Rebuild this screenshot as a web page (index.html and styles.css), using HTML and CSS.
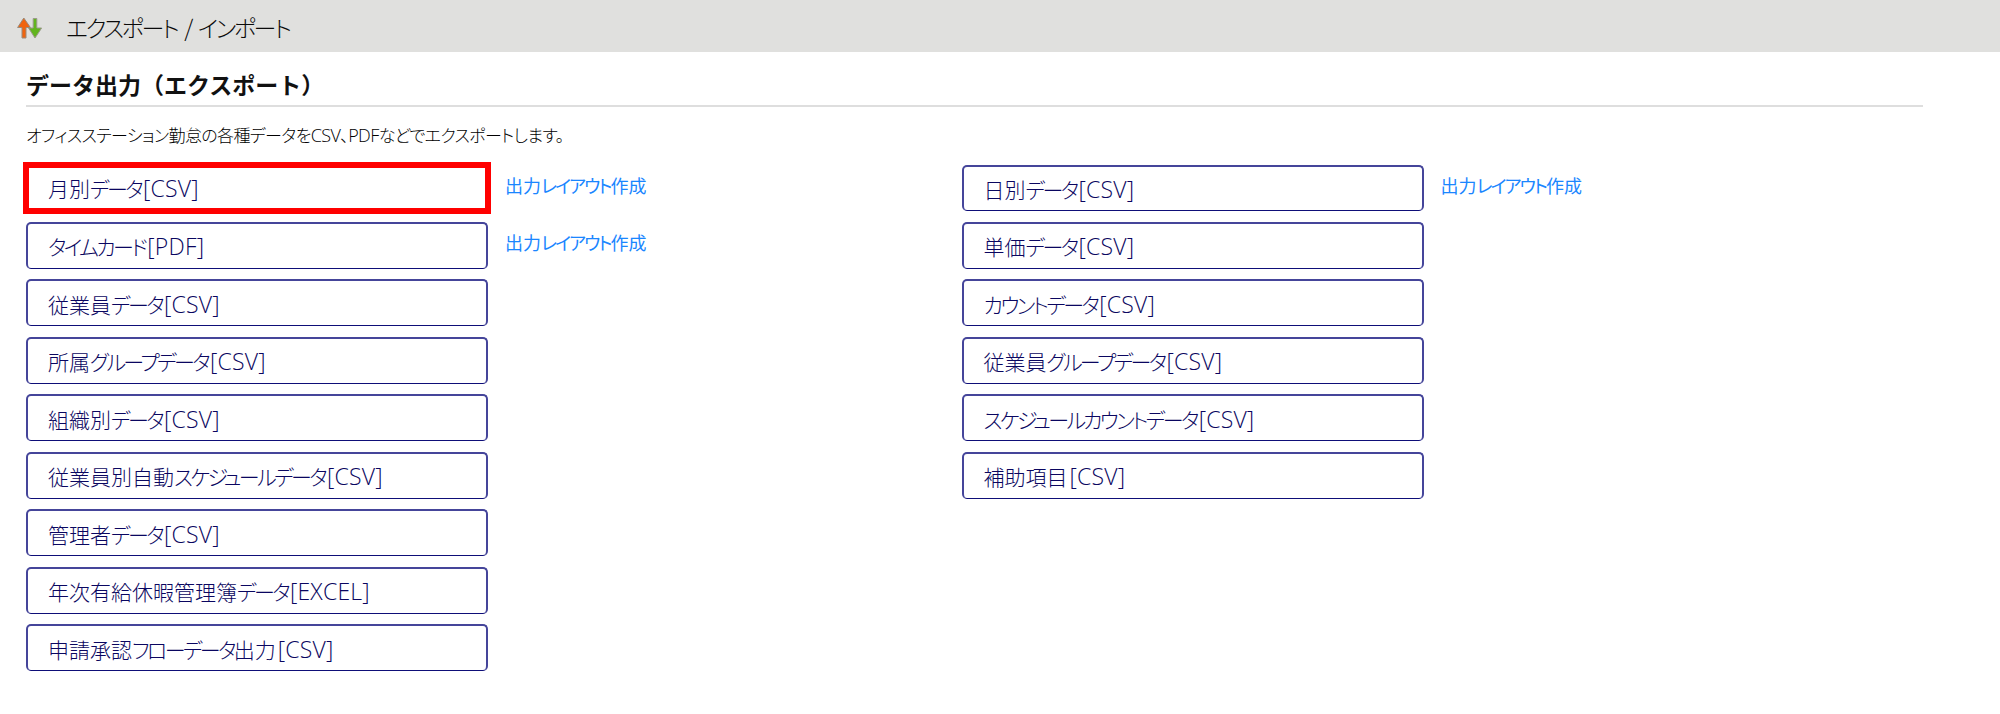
FILE: index.html
```html
<!DOCTYPE html>
<html lang="ja">
<head>
<meta charset="utf-8">
<title>エクスポート / インポート</title>
<link rel="stylesheet" href="styles.css">
</head>
<body>
<header class="topbar">
  <svg class="topbar-icon" width="26" height="26" viewBox="0 0 26 26">
    <path d="M16.2 5.5 H19.8 V15 H24.6 L18 25 L11.6 15 H16.2 Z" fill="#62b51e" stroke="#9a9a8a" stroke-width="1"/>
    <path d="M6.8 5 L13.4 14.5 H9 V25 H5 V14.5 H0.6 Z" fill="#f0640f" stroke="#9a8a7a" stroke-width="1"/>
  </svg>
  <span class="topbar-title">エクスポート / インポート</span>
</header>
<main class="content">
  <h1 class="section-title">データ出力（エクスポート）</h1>
  <p class="lead">オフィスステーション勤怠の各種データを<span class="lead-latin">CSV</span>、<span class="lead-latin">PDF</span>などでエクスポートします。</p>
  <div class="columns">
    <div class="col">
      <div class="row"><a class="btn btn-marked">月別<span class="kana">データ</span><span class="fmt">[CSV]</span></a><a class="layout-link">出力<span class="kana">レイアウト</span>作成</a></div>
      <div class="row"><a class="btn"><span class="kana">タイムカード</span><span class="fmt">[PDF]</span></a><a class="layout-link">出力<span class="kana">レイアウト</span>作成</a></div>
      <div class="row"><a class="btn">従業員<span class="kana">データ</span><span class="fmt">[CSV]</span></a></div>
      <div class="row"><a class="btn">所属<span class="kana">グループデータ</span><span class="fmt">[CSV]</span></a></div>
      <div class="row"><a class="btn">組織別<span class="kana">データ</span><span class="fmt">[CSV]</span></a></div>
      <div class="row"><a class="btn">従業員別自動<span class="kana">スケジュールデータ</span><span class="fmt">[CSV]</span></a></div>
      <div class="row"><a class="btn">管理者<span class="kana">データ</span><span class="fmt">[CSV]</span></a></div>
      <div class="row"><a class="btn">年次有給休暇管理簿<span class="kana">データ</span><span class="fmt">[EXCEL]</span></a></div>
      <div class="row"><a class="btn">申請承認<span class="kana">フローデータ</span>出力<span class="fmt">[CSV]</span></a></div>
    </div>
    <div class="col">
      <div class="row"><a class="btn">日別<span class="kana">データ</span><span class="fmt">[CSV]</span></a><a class="layout-link">出力<span class="kana">レイアウト</span>作成</a></div>
      <div class="row"><a class="btn">単価<span class="kana">データ</span><span class="fmt">[CSV]</span></a></div>
      <div class="row"><a class="btn"><span class="kana">カウントデータ</span><span class="fmt">[CSV]</span></a></div>
      <div class="row"><a class="btn">従業員<span class="kana">グループデータ</span><span class="fmt">[CSV]</span></a></div>
      <div class="row"><a class="btn"><span class="kana">スケジュールカウントデータ</span><span class="fmt">[CSV]</span></a></div>
      <div class="row"><a class="btn">補助項目<span class="fmt">[CSV]</span></a></div>
    </div>
  </div>
</main>
</body>
</html>
```
FILE: styles.css
```css
* { box-sizing: border-box; }
html, body { margin: 0; padding: 0; background: #fff; }
body {
  font-family: "Noto Sans CJK JP", "Noto Sans", sans-serif;
  font-feature-settings: "palt";
  color: #1a1a1a;
  height: 714px;
  overflow: hidden;
}
.topbar {
  height: 52px;
  background: #e0e0de;
  display: flex;
  align-items: center;
  padding-left: 17px;
}
.topbar-icon { margin-right: 23px; flex: none; }
.topbar-title { padding-top: 2px; font-size: 23px; font-weight: 300; letter-spacing: -2.3px; word-spacing: 4px; color: #0a0a0a; }
.content { padding: 0 77px 0 26px; }
.section-title {
  margin: 0;
  height: 55px;
  padding-top: 17px;
  font-size: 23px;
  line-height: 30px;
  font-weight: 700;
  font-feature-settings: normal;
  color: #111;
  border-bottom: 2px solid #dedede;
}
.lead {
  margin: 0;
  height: 57.5px;
  padding-top: 16px;
  font-size: 17px;
  line-height: 24px;
  font-weight: 300;
  letter-spacing: -0.6px;
  color: #000;
}
.lead-latin { font-family: "Open Sans", sans-serif; font-size: 18px; font-weight: 300; }
.columns { display: flex; }
.col { width: 935.5px; display: flex; flex-direction: column; gap: 10.7px; }
.row { display: flex; align-items: flex-start; height: 46.8px; }
.btn {
  width: 462px;
  height: 100%;
  flex: none;
  display: flex;
  align-items: center;
  padding: 1px 0 0 20px;
  font-size: 21px;
  font-weight: 300;
  color: #0a0660;
  background: #fff;
  border: 2px solid #45459a;
  border-bottom: 1.5px solid #0e0e78;
  border-radius: 5px;
}
.kana { letter-spacing: -2.6px; }
.fmt { font-family: "Open Sans", sans-serif; font-size: 23px; font-weight: 300; letter-spacing: 0.2px; margin-left: 2px; }
.btn-marked { outline: 6px solid #f00; outline-offset: -3px; border: 0; border-radius: 0; padding-left: 22px; }
.layout-link {
  margin-left: 17px;
  padding-top: 6px;
  font-size: 18px;
  line-height: 28px;
  font-weight: 400;
  color: #1a86ff;
}
.layout-link .kana { letter-spacing: -1.8px; }
```
